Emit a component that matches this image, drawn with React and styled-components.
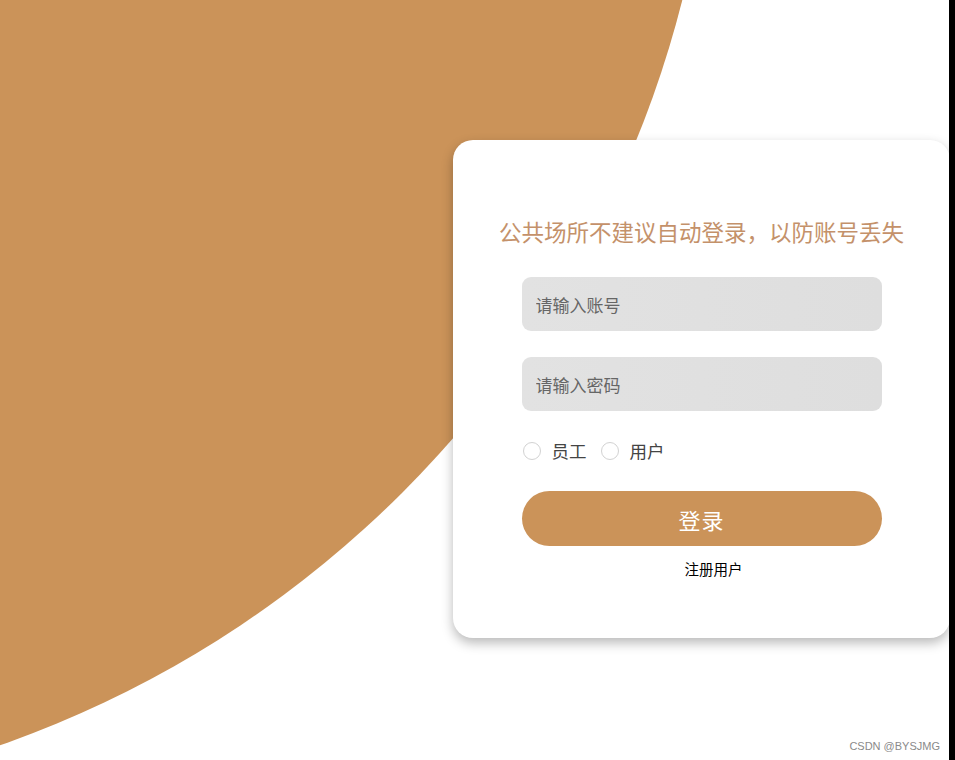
import React from "react";
import styled, { createGlobalStyle } from "styled-components";

const Global = createGlobalStyle`
  html, body { margin: 0; padding: 0; background: #fff; }
  body { font-family: "Noto Sans CJK SC", "Noto Sans", sans-serif; }
  * { box-sizing: border-box; }
`;

const Page = styled.div`
  width: 955px;
  height: 760px;
  display: flex;
  overflow: hidden;
`;

const Stage = styled.div`
  position: relative;
  flex: 1;
  display: flex;
  justify-content: flex-end;
  align-items: flex-start;
  padding-top: 140px;
  overflow: hidden;
  background: #fff;
`;

const Strip = styled.div`
  width: 6px;
  background: #000;
`;

const Circle = styled.div`
  position: absolute;
  left: -1419px;
  top: -1329px;
  width: 2134px;
  height: 2134px;
  border-radius: 50%;
  background: #cb9359;
`;

const Card = styled.div`
  position: relative;
  z-index: 1;
  width: 497px;
  height: 498px;
  margin-right: -1px;
  background: #fff;
  border-radius: 20px;
  box-shadow: 0 5px 12px rgba(0, 0, 0, 0.28);
  display: flex;
  flex-direction: column;
  align-items: center;
  padding-top: 77px;
`;

const Title = styled.h2`
  margin: 0;
  font-size: 22.5px;
  line-height: 28px;
  font-weight: 400;
  color: #c4916a;
  white-space: nowrap;
`;

const Form = styled.div`
  width: 360px;
  display: flex;
  flex-direction: column;
  margin-top: 32px;
`;

const Input = styled.input`
  width: 100%;
  height: 54px;
  border: none;
  outline: none;
  border-radius: 9px;
  background: linear-gradient(90deg, #e2e2e2, #dedede);
  padding: 0 14px;
  font-family: "Noto Sans CJK SC", sans-serif;
  font-size: 17px;
  color: #333;
  margin-bottom: ${(p) => p.$gap}px;
  &::placeholder { color: #666; }
`;

const RadioRow = styled.div`
  display: flex;
  align-items: center;
  height: 20px;
  margin-top: 30px;
  gap: 13px;
`;

const RadioLabel = styled.label`
  display: flex;
  align-items: center;
  gap: 11px;
  font-size: 17.5px;
  color: #444;
  line-height: 20px;
`;

const Radio = styled.input.attrs({ type: "radio" })`
  appearance: none;
  margin: 0 0 0 1px;
  width: 18px;
  height: 18px;
  border-radius: 50%;
  border: 1.5px solid #d2d2d2;
  background: #fff;
`;

const Button = styled.button`
  margin-top: 30px;
  width: 100%;
  height: 55px;
  border: none;
  border-radius: 28px;
  background: #cb9359;
  color: #fff;
  font-family: "Noto Sans CJK SC", sans-serif;
  font-size: 22px;
  letter-spacing: 1px;
`;

const Register = styled.a`
  align-self: center;
  margin-top: 13px;
  padding-left: 24px;
  font-size: 14.5px;
  line-height: 20px;
  color: #000;
  text-decoration: none;
`;

const Watermark = styled.div`
  position: absolute;
  right: 9px;
  bottom: 8px;
  font-family: "Liberation Sans", Arial, sans-serif;
  font-size: 11px;
  color: #8a8a8a;
  z-index: 2;
`;

export default function App() {
  return (
    <>
      <Global />
      <Page>
        <Stage>
          <Circle />
          <Card>
            <Title>公共场所不建议自动登录，以防账号丢失</Title>
            <Form>
              <Input placeholder="请输入账号" $gap={26} />
              <Input type="password" placeholder="请输入密码" $gap={0} />
              <RadioRow>
                <RadioLabel>
                  <Radio name="role" />
                  员工
                </RadioLabel>
                <RadioLabel>
                  <Radio name="role" />
                  用户
                </RadioLabel>
              </RadioRow>
              <Button>登录</Button>
              <Register href="#">注册用户</Register>
            </Form>
          </Card>
          <Watermark>CSDN @BYSJMG</Watermark>
        </Stage>
        <Strip />
      </Page>
    </>
  );
}
